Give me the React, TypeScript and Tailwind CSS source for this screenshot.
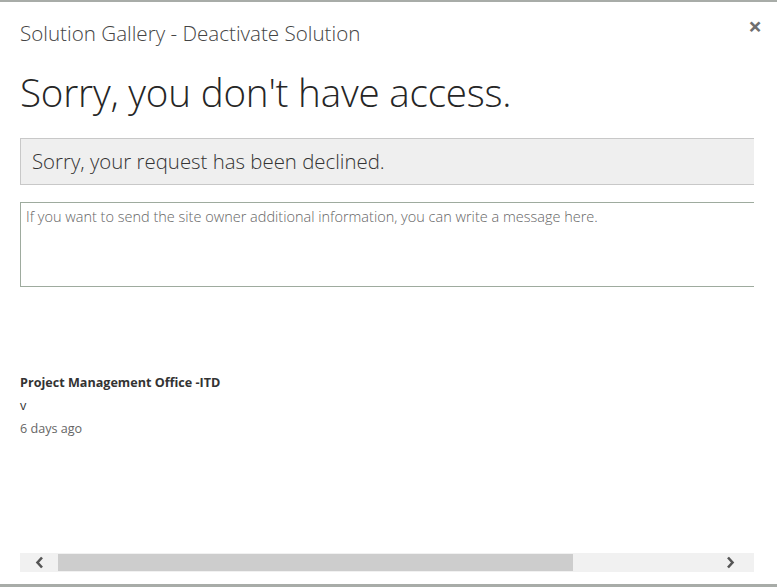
import * as React from "react";

const FONT = { fontFamily: '"Open Sans", "Noto Sans", sans-serif' };

export default function App() {
  return (
    <div className="w-[777px] h-[587px] bg-white overflow-hidden flex flex-col border-t-2 border-b-[3px] border-[#a8aca8]" style={FONT}>
      <div className="relative flex-1 flex flex-col">
        <button className="absolute right-[15px] top-[12px] text-[#6f6f6f] text-[24px] font-bold leading-none">×</button>
        <div className="pl-[20px] overflow-hidden w-[754px] flex-1">
          <div className="w-[800px]">
            <h1 className="text-[20.6px] font-light text-[#444] pt-[18px] leading-[27px]">Solution Gallery - Deactivate Solution</h1>
            <h2 className="text-[38.6px] font-light text-[#262626] mt-[21px] leading-[48px] tracking-[-0.2px]">Sorry, you don't have access.</h2>
            <div className="mt-[22px] h-[47px] bg-[#efefef] border border-[#c8c8c8] flex items-center pl-[11px] text-[20.4px] text-[#333] font-light">
              Sorry, your request has been declined.
            </div>
            <div className="mt-[17px] h-[85px] border border-[#9eab9e] px-[5px] pt-[3px] text-[14.5px] text-[#666] font-light">
              If you want to send the site owner additional information, you can write a message here.
            </div>
            <div className="mt-[84px] text-[12.6px] leading-[23px]">
              <div className="font-bold text-[#333]">Project Management Office -ITD</div>
              <div className="text-[#333]">v</div>
              <div className="text-[#666]">6 days ago</div>
            </div>
          </div>
        </div>
        <div className="ml-[20px] w-[734px] mb-[12px] h-[19px] bg-[#f1f1f1] flex items-center">
          <div className="w-[38px] flex justify-center">
            <svg width="9" height="13" viewBox="0 0 9 13"><path d="M7 1.5 L2.5 6.5 L7 11.5" stroke="#555" strokeWidth="2.6" fill="none" /></svg>
          </div>
          <div className="w-[515px] h-[17px] bg-[#cdcdcd]" />
          <div className="flex-1" />
          <div className="w-[48px] flex justify-center">
            <svg width="9" height="13" viewBox="0 0 9 13"><path d="M2 1.5 L6.5 6.5 L2 11.5" stroke="#555" strokeWidth="2.6" fill="none" /></svg>
          </div>
        </div>
      </div>
    </div>
  );
}
